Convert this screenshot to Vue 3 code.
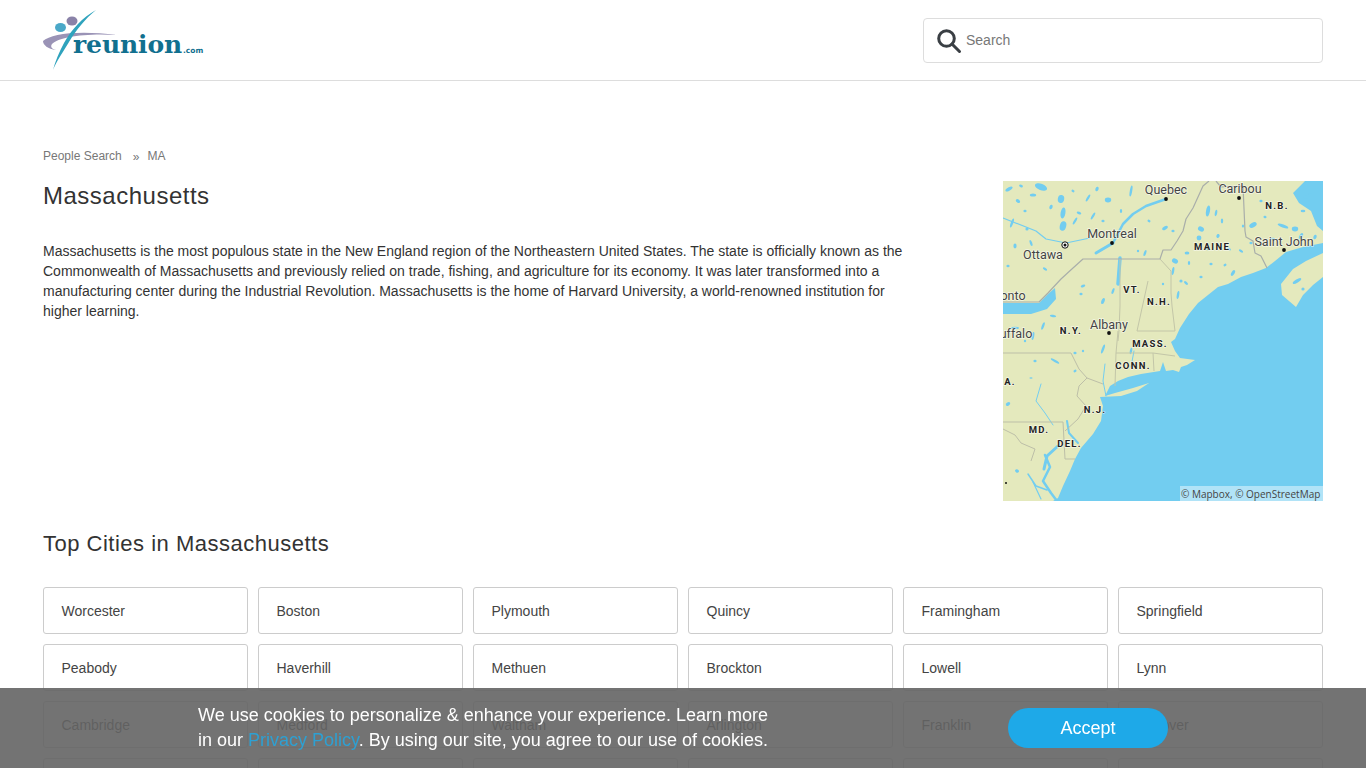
<script setup>
const cities = [
  'Worcester', 'Boston', 'Plymouth', 'Quincy', 'Framingham', 'Springfield',
  'Peabody', 'Haverhill', 'Methuen', 'Brockton', 'Lowell', 'Lynn',
  'Cambridge', 'Medford', 'Waltham', 'Arlington', 'Franklin', 'Andover',
  'Salem', 'Newton', 'Revere', 'Malden', 'Somerville', 'Taunton'
]

const lakes = [
  [6, 8, 5, 2, -30], [15, 20, 3, 2, 40], [38, 6, 8, 4, 20], [30, 14, 4, 2, 0], [58, 18, 4, 5, 10],
  [60, 32, 3, 7, 10], [105, 19, 4, 3, 0], [128, 10, 1.5, 7, 10], [85, 17, 1.5, 5, 30], [76, 32, 3, 1.5, 20],
  [60, 45, 4, 6, 15], [72, 40, 1.5, 5, 30], [9, 42, 1.5, 6, 20], [22, 30, 2, 1.5, 0], [12, 65, 2, 3, 0],
  [5, 85, 2, 1.5, 0], [42, 88, 3, 1.5, 30], [28, 62, 1.5, 4, -20], [90, 35, 1.5, 5, 30], [100, 40, 2, 1.5, 0],
  [162, 47, 4, 2, -30], [170, 50, 2, 1.5, 0], [142, 72, 1.5, 4, 20], [135, 70, 1.5, 1.5, 0], [205, 30, 2.5, 7, 10],
  [198, 48, 4, 3, 30], [196, 57, 3, 3, 0], [213, 32, 1.5, 4, 10], [219, 40, 1.5, 3, 0], [184, 72, 3, 2, 0],
  [172, 80, 4, 3, 30], [170, 90, 1.5, 5, 10], [183, 102, 3, 1.5, 40], [198, 96, 2, 1.5, 0], [208, 83, 2, 1.5, 0],
  [230, 92, 2, 4, 30], [238, 70, 3, 1.5, 30], [250, 44, 3, 5, 60], [280, 45, 7, 2, 20], [292, 48, 4, 3, 0],
  [248, 62, 2, 1.5, 0], [258, 20, 2, 1.5, 0], [298, 55, 2, 4, 30], [305, 15, 6, 2, -30], [300, 30, 3, 1.5, 0],
  [175, 114, 1.5, 5, 10], [178, 100, 2, 2, 0], [160, 103, 1.5, 1.5, 0], [110, 110, 1.5, 4, 20], [80, 105, 3, 1.5, -20],
  [78, 113, 2, 1.5, 0], [100, 120, 2, 4, 20], [50, 135, 4, 1.5, 10], [40, 145, 1.5, 5, 20], [30, 155, 1.5, 5, 10],
  [22, 160, 1.5, 1.5, 0], [12, 147, 5, 1.5, 0], [128, 170, 1.5, 4, 10], [100, 168, 1.5, 6, 20], [72, 172, 2, 1.5, 0],
  [52, 180, 6, 1.5, 30], [72, 190, 2, 1.5, -30], [28, 197, 2, 1, 0], [5, 223, 3, 2, -30], [294, 100, 6, 2, -30],
  [300, 108, 2, 2, 0], [14, 290, 2.5, 2, 30], [32, 180, 2, 1.5, 0], [80, 170, 1.5, 1.5, 0], [240, 45, 1.5, 2, 0],
  [18, 5, 2.5, 1.5, 20], [48, 26, 2, 3, 20], [24, 48, 2, 2, 0], [70, 10, 2, 1.5, 30], [94, 8, 2, 3, 20],
  [118, 30, 1.5, 2.5, 0], [146, 40, 2, 1.5, 30], [215, 55, 2, 2.5, 20], [226, 68, 2.5, 1.5, 30], [205, 68, 1.5, 1.5, 0],
  [222, 84, 2, 1.5, -30], [186, 82, 1.5, 2.5, 0], [262, 36, 2, 1.5, 20], [270, 58, 2.5, 1.5, 0], [312, 56, 2, 3, 20]
].map(([x, y, rx, ry, r]) => [x, y, rx * 0.8, ry * 0.8, r])

const labels = [
  { t: 'Quebec', x: 163, y: 13, k: 'place' },
  { t: 'Caribou', x: 237, y: 12, k: 'place' },
  { t: 'Montreal', x: 109, y: 57, k: 'place' },
  { t: 'Ottawa', x: 40, y: 78, k: 'place' },
  { t: 'Saint John', x: 281, y: 65, k: 'place' },
  { t: 'onto', x: 10, y: 119, k: 'place' },
  { t: 'Albany', x: 106, y: 148, k: 'place' },
  { t: 'uffalo', x: 13, y: 157, k: 'place' },
  { t: 'N.B.', x: 274, y: 28, k: 'state' },
  { t: 'MAINE', x: 209, y: 68.5, k: 'state' },
  { t: 'VT.', x: 129, y: 111.5, k: 'state' },
  { t: 'N.H.', x: 156, y: 123.5, k: 'state' },
  { t: 'N.Y.', x: 68, y: 152.5, k: 'state' },
  { t: 'MASS.', x: 147, y: 166, k: 'state' },
  { t: 'CONN.', x: 130, y: 187.5, k: 'state' },
  { t: 'A.', x: 7, y: 203.5, k: 'state' },
  { t: 'N.J.', x: 92, y: 231.5, k: 'state' },
  { t: 'MD.', x: 36, y: 251.5, k: 'state' },
  { t: 'DEL.', x: 66.500, y: 265.5, k: 'state' }
]

const dots = [[163, 18], [236, 17], [109, 62], [281, 69], [106, 152]]
</script>

<template>
  <div class="page">
    <header class="topbar">
      <svg class="logo" width="162" height="62" viewBox="0 0 162 62" role="img" aria-label="reunion.com">
        <ellipse cx="17.5" cy="17.5" rx="5.5" ry="4.5" fill="#4aa8c8" />
        <ellipse cx="29" cy="11" rx="5.5" ry="4.5" fill="#8a82a8" />
        <path d="M0 31C8 24 34 20 74 25C42 23 16 27 9 34C7 37 9 39 13 40C5 39 0 35 0 31Z" fill="#9a93b6" />
        <path d="M53 0C40 7 28 20 21 33C16 42 12 52 10 60C13 52 20 42 26 32C33 20 42 9 53 0Z" fill="#2fa3bd" />
        <text x="30" y="43" class="logo-word">reunion</text>
        <text x="140" y="43" class="logo-com">.com</text>
      </svg>
      <label class="search">
        <svg width="26" height="26" viewBox="0 0 26 26" fill="none" stroke="#3a3f44" stroke-width="3">
          <circle cx="10.5" cy="10.5" r="7.8" />
          <path d="M16 16L23.5 23.5" stroke-linecap="round" />
        </svg>
        <input type="text" placeholder="Search" />
      </label>
    </header>

    <main class="content">
      <nav class="crumbs">
        <span>People Search</span>
        <span class="sep">»</span>
        <span>MA</span>
      </nav>

      <section class="intro">
        <div class="intro-text">
          <h1>Massachusetts</h1>
          <p>Massachusetts is the most populous state in the New England region of the Northeastern United States. The state is officially known as the Commonwealth of Massachusetts and previously relied on trade, fishing, and agriculture for its economy. It was later transformed into a manufacturing center during the Industrial Revolution. Massachusetts is the home of Harvard University, a world-renowned institution for higher learning.</p>
        </div>
        <svg class="map" width="320" height="320" viewBox="0 0 320 320">
          <rect width="320" height="320" fill="#e4e9bd" />
          <g class="water">
            <path fill="#72cdf0" d="M320 62L300 66L283 71L272 80L263 87L250 92L238 96L225 103L215 106L205 114L195 122L186 133L177 147L172 158L168 161L172 170L177 177L192 179L184 184L178 186L176 191L170 189L163 190L160 181L157 190L138 193L125 196L115 200L107 205L102 215L112 212L130 207L146 202L134 210L118 215L97 216L100 225L98 240L90 253L78 267L72 278L67 290L60 305L55 317L50 320H320Z" />
            <path fill="#e4e9bd" d="M320 72L303 80L290 88L278 103L279 114L293 126L300 114L310 104L320 96Z" />
            <path fill="#72cdf0" d="M320 0H302L290 12L296 22L308 30L314 45L320 50Z" />
            <path fill="#72cdf0" d="M0 122H36L45 113L52 107L53 118L44 128L28 133H0Z" />
            <g fill="none" stroke="#72cdf0" stroke-linecap="round" stroke-linejoin="round">
              <path d="M163 18L143 25L130 33L120 43L110 62" stroke-width="2.5" />
              <path d="M110 62L93 72" stroke-width="3" />
              <path d="M117 77L115 103" stroke-width="3.5" />
              <path d="M87 57L63 62L43 58L33 50L0 37" stroke-width="1.2" />
              <path d="M42 274L47 286L40 300L48 312L54 320" stroke-width="2.5" />
              <path d="M55 265L44 275L41 288" stroke-width="3" />
              <path d="M25 293L33 305L44 309" stroke-width="1.5" />
              <path d="M30 301L38 318" stroke-width="1.2" />
              <path d="M38 203L33 220L42 232L50 244" stroke-width="1" />
              <path d="M64 240L66 252L75 262" stroke-width="2" />
              <path d="M102 183L100 200L103 215" stroke-width="1" />
              <path d="M131 170L128 186" stroke-width="1" />
            </g>
            <ellipse v-for="(l, i) in lakes" :key="i" :cx="l[0]" :cy="l[1]" :rx="l[2]" :ry="l[3]" :transform="`rotate(${l[4]} ${l[0]} ${l[1]})`" fill="#72cdf0" />
          </g>
          <g fill="none" stroke="#a9aeaa" stroke-linejoin="round">
            <path d="M0 121H36L45 112L58 98L70 87L80 78H157L160 69L168 69L174 60L180 50L183 38L190 27L200 5L206 0" stroke-width="1.2" />
            <path d="M213 0L218 6L240 5L242 50L243 56L250 60L252 72L258 75L264 87" stroke-width="1.2" />
            <g stroke="#c3c6a8" stroke-width="1">
              <path d="M157 78L168 90V112L169 125L172 150" />
              <path d="M117 78V125L116 150L115 160" />
              <path d="M145 100L134 150H172" />
              <path d="M115 150L113 172H150L172 175" />
              <path d="M150 172L151 190" />
              <path d="M113 172L112 205" />
            </g>
            <g stroke="#bdbfa8" stroke-width="1">
              <path d="M0 172H68L76 188L84 197L100 203" />
              <path d="M84 197L76 205L74 215L83 225L75 238L62 250" />
              <path d="M0 241H60L62 278H72" />
              <path d="M0 248L12 254L18 262L32 268L28 280" />
            </g>
          </g>
          <g fill="#111">
            <circle v-for="(d, i) in dots" :key="i" :cx="d[0]" :cy="d[1]" r="1.9" />
            <circle cx="3" cy="302" r="1" />
          </g>
          <circle cx="62" cy="64" r="3.2" fill="#fff" stroke="#111" />
          <circle cx="62" cy="64" r="1.5" fill="#111" />
          <text v-for="l in labels" :key="l.t" :x="l.x" :y="l.y" text-anchor="middle" :class="l.k">{{ l.t }}</text>
          <rect x="177" y="305" width="143" height="15" fill="#fff" opacity=".45" />
          <text x="178" y="316.500" class="attrib">© Mapbox, © OpenStreetMap</text>
        </svg>
      </section>

      <h2>Top Cities in Massachusetts</h2>
      <div class="grid">
        <a v-for="c in cities" :key="c" class="city">{{ c }}</a>
      </div>
    </main>

    <aside class="cookie">
      <p>We use cookies to personalize &amp; enhance your experience. Learn more<br />in our <a>Privacy Policy</a>. By using our site, you agree to our use of cookies.</p>
      <button type="button">Accept</button>
    </aside>
  </div>
</template>

<style>
html, body { overflow: hidden; height: 768px; }
</style>

<style scoped>
.page {
  font-family: "Liberation Sans", Arial, sans-serif;
  color: #333;
  background: #fff;
}
.topbar {
  height: 80px;
  box-sizing: content-box;
  border-bottom: 1px solid #ddd;
  padding: 0 43px;
  display: flex;
  justify-content: space-between;
  align-items: flex-start;
}
.logo { margin-top: 10px; display: block; }
.logo-word {
  font-family: "DejaVu Serif", serif;
  font-weight: 700;
  font-size: 25px;
  letter-spacing: -.1px;
  fill: #11708f;
}
.logo-com {
  font-family: "DejaVu Sans", sans-serif;
  font-weight: 700;
  font-size: 7.500px;
  fill: #11708f;
}
.search {
  margin-top: 18px;
  width: 400px;
  height: 45px;
  box-sizing: border-box;
  border: 1px solid #ddd;
  border-radius: 4px;
  display: flex;
  align-items: center;
  padding-left: 12px;
  gap: 4px;
}
.search input {
  flex: 1;
  border: 0;
  outline: 0;
  padding: 0 0 2px;
  font: 14px "Liberation Sans", Arial, sans-serif;
  color: #333;
  background: transparent;
}
.search input::placeholder { color: #777; opacity: 1; }
.content { padding: 67px 43px 0; }
.crumbs {
  display: flex;
  font-size: 12px;
  line-height: 16px;
  color: #777;
}
.sep { margin: 1px 8px 0 11px; }
.intro {
  display: flex;
  justify-content: space-between;
  align-items: flex-start;
  margin-top: 16px;
}
.intro-text { width: 870px; }
h1 {
  margin: 0;
  font-size: 24px;
  font-weight: 400;
  line-height: 30px;
  letter-spacing: .5px;
  color: #333;
}
p { margin: 0; }
.intro-text p {
  margin-top: 30px;
  font-size: 14px;
  line-height: 20px;
  color: #333;
}
.map { display: block; flex: none; }
.water { filter: blur(.3px); }
.place {
  font-family: Roboto, sans-serif;
  font-size: 12.5px;
  fill: #444;
  paint-order: stroke;
  stroke: rgba(255,255,255,.6);
  stroke-width: 1.5px;
}
.state {
  font-family: Roboto, sans-serif;
  font-weight: 700;
  font-size: 9.5px;
  letter-spacing: 1.3px;
  fill: #222;
  paint-order: stroke;
  stroke: rgba(255,255,255,.6);
  stroke-width: 1.5px;
}
.attrib {
  font-family: "Open Sans", sans-serif;
  font-size: 10px;
  fill: #444;
}
h2 {
  margin: 28px 0 0;
  font-size: 22px;
  font-weight: 400;
  line-height: 30px;
  letter-spacing: .5px;
  color: #333;
}
.grid {
  margin-top: 28px;
  display: grid;
  grid-template-columns: repeat(6, 205px);
  grid-auto-rows: 47px;
  gap: 10px;
}
.grid .city {
  box-sizing: border-box;
  border: 1px solid #ccc;
  border-radius: 3px;
  padding-left: 17.500px;
  display: flex;
  align-items: center;
  font-size: 14px;
  color: #444;
}
.cookie {
  position: fixed;
  left: 0;
  right: 0;
  bottom: 0;
  height: 80px;
  background: rgba(100,100,100,.9);
  display: flex;
  align-items: center;
  padding-left: 198px;
  box-sizing: border-box;
}
.cookie p {
  width: 810px;
  flex: none;
  font-size: 18px;
  line-height: 25px;
  color: #fff;
}
.cookie p a { color: #2ea0d2; }
.cookie button {
  width: 160px;
  height: 40px;
  border: 0;
  border-radius: 20px;
  background: #1ea9e8;
  color: #fff;
  font: 18px "Liberation Sans", Arial, sans-serif;
  padding: 0;
}
</style>
